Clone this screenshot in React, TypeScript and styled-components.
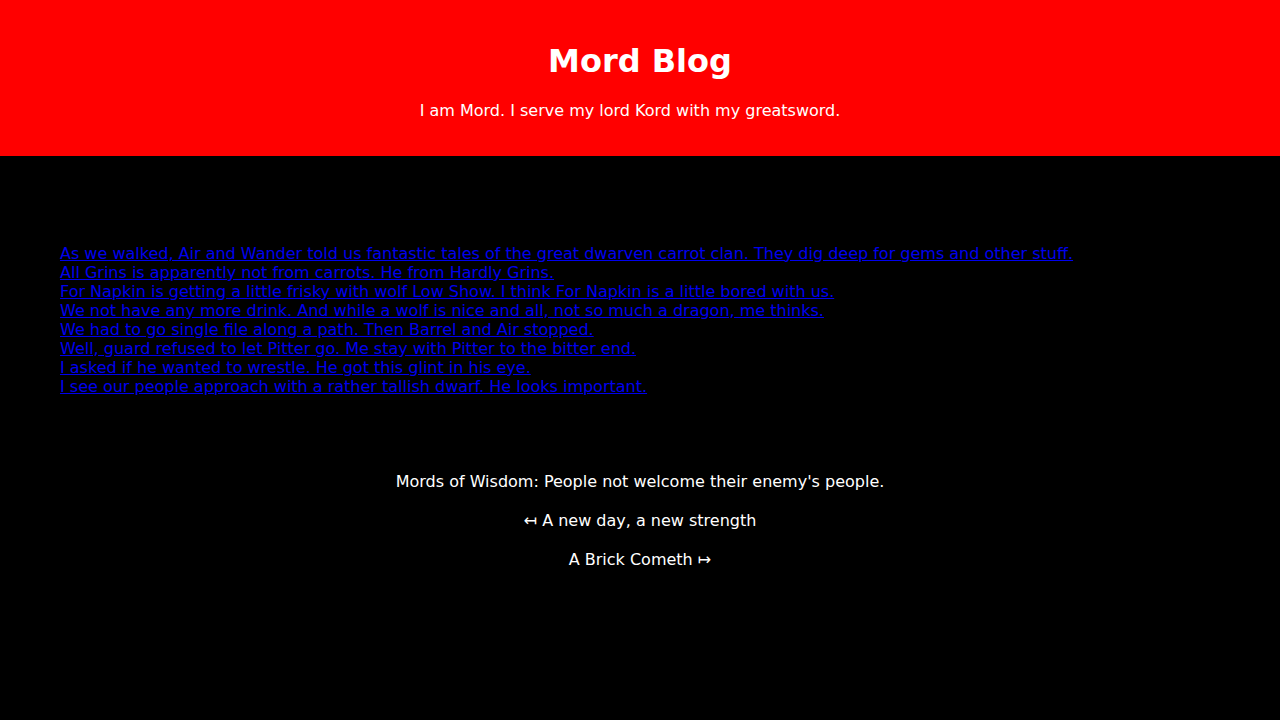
import * as React from "react";
import styled, { createGlobalStyle } from "styled-components";

const GlobalStyle = createGlobalStyle`
  html, body {
    margin: 0;
    padding: 0;
    background: #000;
  }
  body {
    font-family: "DejaVu Sans", sans-serif;
    font-size: 16px;
    color: #fff;
  }
`;

const Header = styled.header`
  background: #ff0000;
  color: #fff;
  text-align: center;
  padding: 20px;
  height: 156px;
  box-sizing: border-box;
`;

const Title = styled.h1`
  font-size: 32px;
  font-weight: bold;
  margin: 23px 0 0;
  line-height: 37px;
`;

const Tagline = styled.p`
  margin: 21px 0 0;
  padding-right: 20px;
  line-height: 19px;
`;

const Main = styled.main`
  padding: 88px 60px 0;
`;

const PostList = styled.ul`
  list-style: none;
  margin: 0;
  padding: 0;
`;

const PostItem = styled.li`
  line-height: 19px;
`;

const PostLink = styled.a`
  color: #0000ee;
  text-decoration: underline;
`;

const Footer = styled.footer`
  text-align: center;
  padding-top: 76px;
  display: flex;
  flex-direction: column;
  gap: 20px;
`;

const FooterLine = styled.p`
  margin: 0;
  line-height: 19px;
`;

const posts = [
  "As we walked, Air and Wander told us fantastic tales of the great dwarven carrot clan. They dig deep for gems and other stuff.",
  "All Grins is apparently not from carrots. He from Hardly Grins.",
  "For Napkin is getting a little frisky with wolf Low Show. I think For Napkin is a little bored with us.",
  "We not have any more drink. And while a wolf is nice and all, not so much a dragon, me thinks.",
  "We had to go single file along a path. Then Barrel and Air stopped.",
  "Well, guard refused to let Pitter go. Me stay with Pitter to the bitter end.",
  "I asked if he wanted to wrestle. He got this glint in his eye.",
  "I see our people approach with a rather tallish dwarf. He looks important.",
];

export default function App() {
  return (
    <>
      <GlobalStyle />
      <Header>
        <Title>Mord Blog</Title>
        <Tagline>I am Mord. I serve my lord Kord with my greatsword.</Tagline>
      </Header>
      <Main>
        <PostList>
          {posts.map((p) => (
            <PostItem key={p}>
              <PostLink href="#">{p}</PostLink>
            </PostItem>
          ))}
        </PostList>
        <Footer>
          <FooterLine>Mords of Wisdom: People not welcome their enemy's people.</FooterLine>
          <FooterLine>↤ A new day, a new strength</FooterLine>
          <FooterLine>A Brick Cometh ↦</FooterLine>
        </Footer>
      </Main>
    </>
  );
}
